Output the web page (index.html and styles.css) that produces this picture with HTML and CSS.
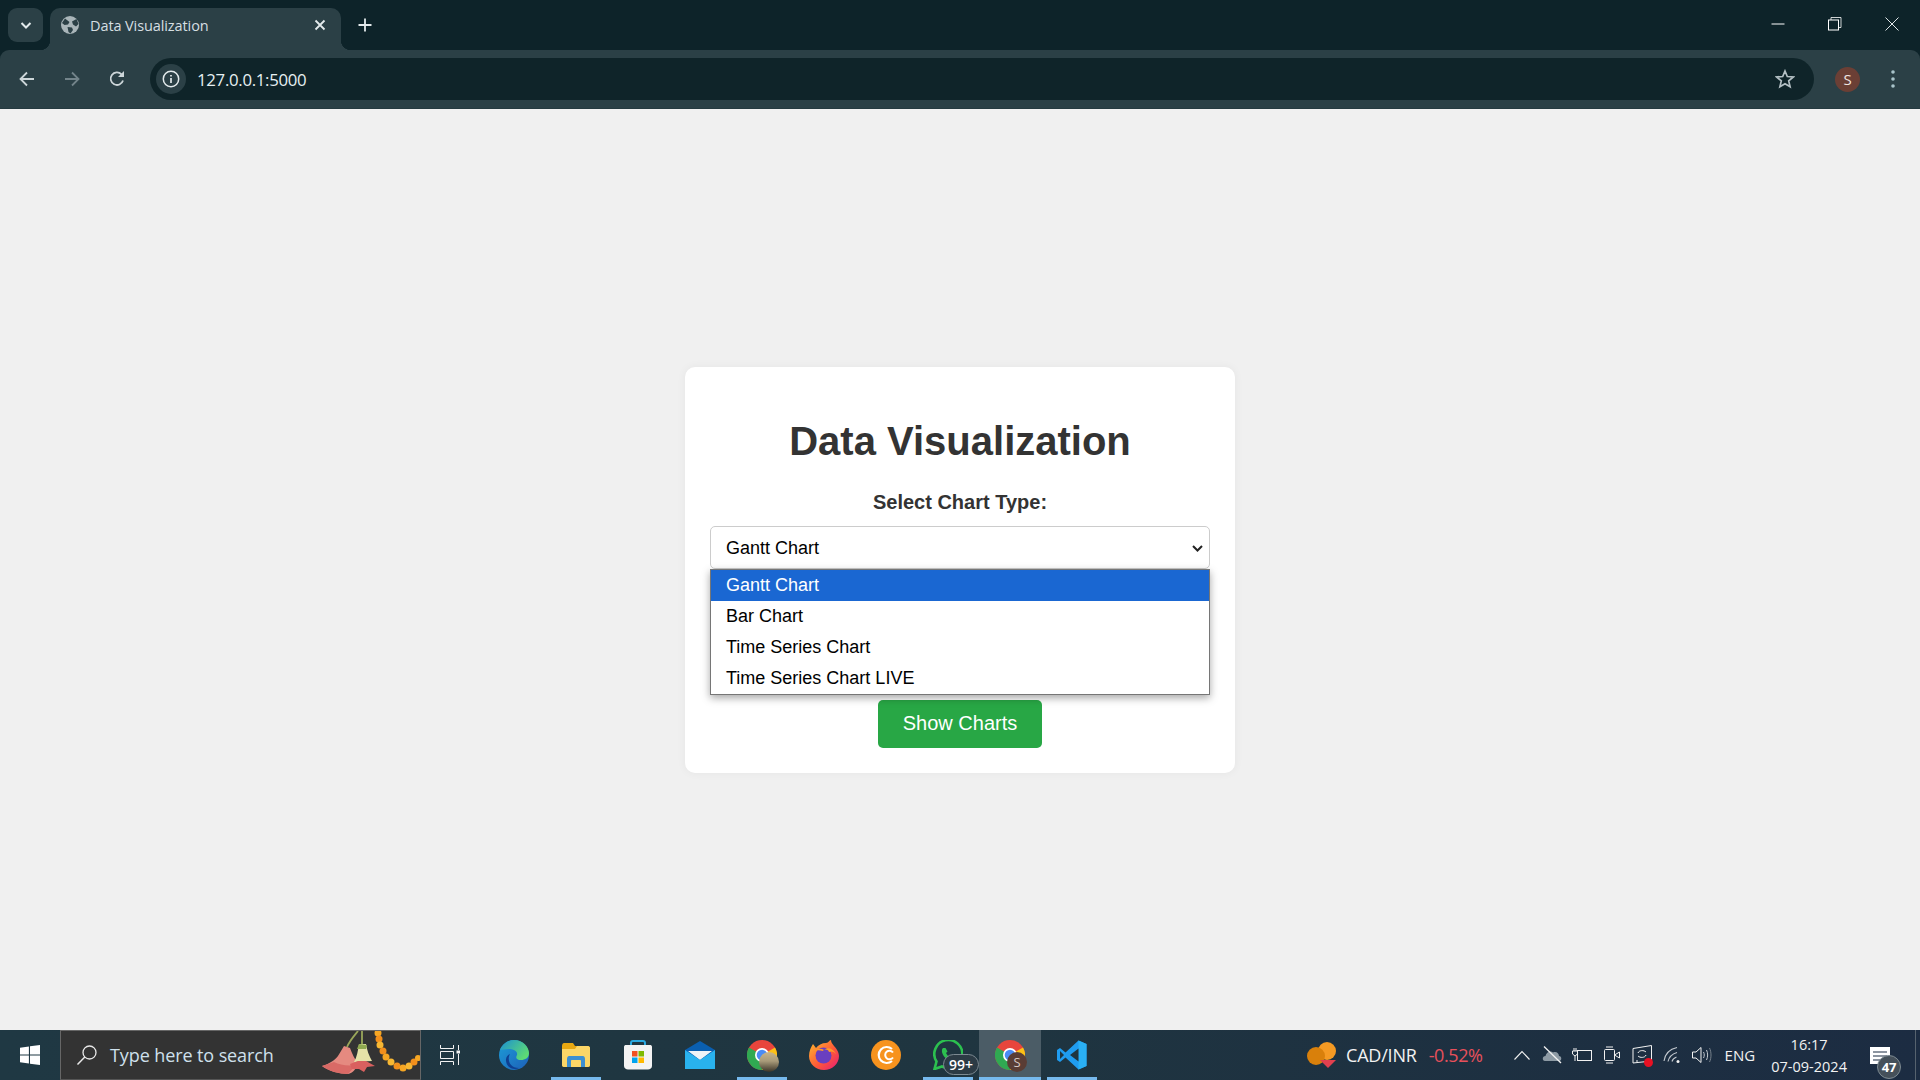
FILE: index.html
```html
<!DOCTYPE html>
<html lang="en">
<head>
    <meta charset="UTF-8">
    <title>Data Visualization</title>
    <link rel="stylesheet" href="styles.css">
</head>
<body>
    <!-- browser chrome -->
    <header class="browser">
        <div class="tabstrip">
            <div class="tab-search">
                <svg width="14" height="14" viewBox="0 0 14 14"><path d="M2.500 5 7 9.500 11.500 5" fill="none" stroke="#e3eaec" stroke-width="2"/></svg>
            </div>
            <div class="tab">
                <svg class="favicon" width="18" height="18" viewBox="0 0 18 18"><circle cx="9" cy="9" r="9" fill="#a9b5b9"/><path d="M4 2.500 8.500 6 7 8.500 3.500 9 1 7ZM11 5.500 15.500 3 17.500 8 15 10.500 12 8.500ZM6.500 11 11 11.500 12 14 9.500 17.500 7.500 16Z" fill="#2b4046"/></svg>
                <span class="tab-title">Data Visualization</span>
                <svg class="tab-close" width="12" height="12" viewBox="0 0 12 12"><path d="M1.500 1.500 10.500 10.500M10.500 1.500 1.500 10.500" stroke="#e3eaec" stroke-width="1.800"/></svg>
            </div>
            <svg class="new-tab" width="14" height="14" viewBox="0 0 14 14"><path d="M7 0.500V13.500M0.500 7H13.500" stroke="#e3eaec" stroke-width="1.800"/></svg>
            <div class="window-controls">
                <svg width="14" height="14" viewBox="0 0 14 14"><path d="M0.500 7H13.500" stroke="#fff"/></svg>
                <svg width="14" height="14" viewBox="0 0 14 14"><rect x="0.500" y="3" width="10" height="10" fill="none" stroke="#fff"/><path d="M3 3V0.500H13V10.500H10.500" fill="none" stroke="#fff" stroke-width="0.800"/></svg>
                <svg width="14" height="14" viewBox="0 0 14 14"><path d="M0.500 0.500 13.500 13.500M13.500 0.500 0.500 13.500" stroke="#dfe5e7"/></svg>
            </div>
        </div>
        <div class="toolbar">
            <svg class="nav-icon" width="18" height="18" viewBox="0 0 18 18"><path d="M16 9H3M9 2.500 2.500 9 9 15.500" fill="none" stroke="#cdd6d9" stroke-width="1.800"/></svg>
            <svg class="nav-icon" width="18" height="18" viewBox="0 0 18 18"><path d="M2 9H15M9 2.500 15.500 9 9 15.500" fill="none" stroke="#73848a" stroke-width="1.800"/></svg>
            <svg class="nav-icon" width="18" height="18" viewBox="0 0 18 18"><path d="M15 10.500A6.300 6.300 0 1 1 13.500 4.300" fill="none" stroke="#cdd6d9" stroke-width="1.800"/><path d="M16 1V7H10Z" fill="#cdd6d9"/></svg>
            <div class="omnibox">
                <div class="site-info">
                    <svg width="18" height="18" viewBox="0 0 18 18"><circle cx="9" cy="9" r="7.700" fill="none" stroke="#e3eaec" stroke-width="1.500"/><path d="M9 8V13M9 5V6.500" stroke="#e3eaec" stroke-width="1.700"/></svg>
                </div>
                <span class="url">127.0.0.1:5000</span>
                <svg class="star" width="20" height="20" viewBox="0 0 20 20"><path d="M10 2 12.300 7.500 18.300 8 13.700 11.900 15.100 17.800 10 14.700 4.900 17.800 6.300 11.900 1.700 8 7.700 7.500Z" fill="none" stroke="#b4c0c4" stroke-width="1.700"/></svg>
            </div>
            <div class="avatar">S</div>
            <svg class="menu-dots" width="6" height="20" viewBox="0 0 6 20"><circle cx="3" cy="3" r="1.800" fill="#a9c4cb"/><circle cx="3" cy="10" r="1.800" fill="#a9c4cb"/><circle cx="3" cy="17" r="1.800" fill="#a9c4cb"/></svg>
        </div>
    </header>

    <!-- page content -->
    <main class="page">
        <div class="card">
            <h1>Data Visualization</h1>
            <label class="chart-label" for="chartType">Select Chart Type:</label>
            <div class="select-wrap">
                <select id="chartType" class="chart-select">
                    <option>Gantt Chart</option>
                    <option>Bar Chart</option>
                    <option>Time Series Chart</option>
                    <option>Time Series Chart LIVE</option>
                </select>
                <svg class="select-arrow" width="11" height="7" viewBox="0 0 11 7"><path d="M1 1 5.500 5.500 10 1" fill="none" stroke="#222" stroke-width="2"/></svg>
                <ul class="select-popup">
                    <li class="selected">Gantt Chart</li>
                    <li>Bar Chart</li>
                    <li>Time Series Chart</li>
                    <li>Time Series Chart LIVE</li>
                </ul>
            </div>
            <button type="button" class="btn-show">Show Charts</button>
        </div>
    </main>

    <!-- windows taskbar -->
    <footer class="taskbar">
        <div class="start">
            <svg width="20" height="20" viewBox="0 0 20 20"><path d="M0 2.800 8.900 1.500V9.500H0ZM10 1.300 20 0V9.500H10ZM0 10.500H8.900V18.500L0 17.200ZM10 10.500H20V20L10 18.700Z" fill="#fff"/></svg>
        </div>
        <div class="search">
            <svg width="22" height="22" viewBox="0 0 22 22"><circle cx="13.500" cy="8.500" r="6.500" fill="none" stroke="#e8e8e8" stroke-width="1.300"/><path d="M8.800 13 1.500 20.500" stroke="#e8e8e8" stroke-width="1.500"/></svg>
            <span class="search-text">Type here to search</span>
            <svg class="search-art" width="100" height="49" viewBox="0 0 100 49">
                <path d="M38 0C34 5 30 9 27 16M42 0V13" fill="none" stroke="#9aa75a" stroke-width="1.800"/>
                <path d="M24 15 30 17C32 23 35 28 38 33C36 38 33 42 28 43C20 43 8 40 2 35C9 33 15 29 18 25C20 22 22 18 24 15Z" fill="#e58a80"/>
                <path d="M14 31C20 34 27 35 36 34L28 43C20 43 8 40 2 35Z" fill="#d96a66"/>
                <path d="M39 13H46C47 19 49 25 52 30L34 31C37 26 38 19 39 13Z" fill="#e6e2a8"/>
                <path d="M37 18 46 18 47 14 39 13Z" fill="#8fa850"/>
                <path d="M30 33 38 30 46 30 55 35 47 36 44 41 39 38 32 38Z" fill="#d9605f"/>
                <circle cx="58" cy="2" r="3.500" fill="#f6a623"/><circle cx="59" cy="8" r="3.500" fill="#f28f1c"/><circle cx="60" cy="14" r="3.500" fill="#f7b733"/><circle cx="63" cy="20" r="3.500" fill="#f28f1c"/><circle cx="66" cy="26" r="3.500" fill="#f6a623"/><circle cx="71" cy="31" r="3.500" fill="#f7b733"/><circle cx="77" cy="35" r="3.500" fill="#f28f1c"/><circle cx="83" cy="37" r="3.500" fill="#f6a623"/><circle cx="89" cy="35" r="3.500" fill="#f7b733"/><circle cx="94" cy="31" r="3.500" fill="#f28f1c"/><circle cx="98" cy="27" r="3" fill="#f6a623"/>
            </svg>
        </div>
        <div class="task-item task-view">
            <svg width="20" height="20" viewBox="0 0 20 20"><path d="M0.500 0V3.500H13.500V0M0.500 20V16.500H13.500V20M0.500 6.500H13.500V13.500H0.500ZM18.500 0V5M18.500 9V20" fill="none" stroke="#f2f2f2" stroke-width="1"/><rect x="16.500" y="5.500" width="3.500" height="3" fill="#f2f2f2"/></svg>
        </div>
        <div class="task-item">
            <svg width="30" height="30" viewBox="0 0 30 30">
                <defs><linearGradient id="edgeA" x1="0" y1="0" x2="1" y2="1"><stop offset="0" stop-color="#1c9ed8"/><stop offset="1" stop-color="#1d5fb8"/></linearGradient><linearGradient id="edgeB" x1="0" y1="0" x2="1" y2="0.600"><stop offset="0" stop-color="#1b8fd3"/><stop offset="1" stop-color="#5ddb74"/></linearGradient></defs>
                <circle cx="15" cy="15" r="15" fill="url(#edgeA)"/>
                <path d="M1 10C4 3 10 0 15 0C24 0 30 7 30 13C30 18 26 20 22 20C18 20 16 18 18 15C19 11 14 9 10 9C6 9 3 10 1 10Z" fill="url(#edgeB)"/>
                <path d="M11 14C8 19 10 28 20 28C16 30 8 29 7 21C6.500 17 9 15 11 14Z" fill="#0f3f92"/>
            </svg>
        </div>
        <div class="task-item running">
            <svg width="28" height="24" viewBox="0 0 28 24">
                <path d="M0 3C0 1 1 0 2 0H11L13 3H26C27 3 28 4 28 5V22C28 23 27 24 26 24H2C1 24 0 23 0 22Z" fill="#e8a812"/>
                <path d="M0 6H13L15 3H26C27 3 28 4 28 5V22C28 23 27 24 26 24H2C1 24 0 23 0 22Z" fill="#fcd667"/>
                <path d="M5 24V16C5 14 6 13 7 13H21C22 13 23 14 23 16V24H19V18C19 17 18.500 17 18 17H10C9.500 17 9 17 9 18V24Z" fill="#3d8fd1"/>
            </svg>
        </div>
        <div class="task-item">
            <svg width="30" height="30" viewBox="0 0 30 30">
                <path d="M8 6V3C8 1.500 9 1 10 1H20C21 1 22 1.500 22 3V6" fill="none" stroke="#29a9e1" stroke-width="2"/>
                <path d="M1 7C1 5.500 2 5 3 5H27C28 5 29 5.500 29 7V26C29 28 27 29.500 25 29.500H5C3 29.500 1 28 1 26Z" fill="#f3f3f3"/>
                <rect x="9" y="11" width="5.500" height="5.500" fill="#f25022"/><rect x="15.500" y="11" width="5.500" height="5.500" fill="#7fba00"/><rect x="9" y="17.500" width="5.500" height="5.500" fill="#00a4ef"/><rect x="15.500" y="17.500" width="5.500" height="5.500" fill="#ffb900"/>
            </svg>
        </div>
        <div class="task-item">
            <svg width="30" height="28" viewBox="0 0 30 28">
                <path d="M15 0 30 9V28H0V9Z" fill="#0a5fb0"/>
                <path d="M3 10H27L15 19Z" fill="#eef3f7"/>
                <path d="M0 9 15 19 30 9V28H0Z" fill="#29b2ee"/>
            </svg>
        </div>
        <div class="task-item running">
            <span class="icon-wrap">
                <svg width="30" height="30" viewBox="0 0 30 30">
                    <circle cx="15" cy="15" r="15" fill="#e8453c"/>
                    <path d="M15 15 28 7.500A15 15 0 0 1 15 30Z" fill="#fbc116"/>
                    <path d="M15 15 15 30A15 15 0 0 1 2 7.500Z" fill="#30a952"/>
                    <circle cx="15" cy="15" r="7" fill="#fff"/><circle cx="15" cy="15" r="5.300" fill="#4b8bf5"/>
                </svg>
                <span class="chrome-badge photo"></span>
            </span>
        </div>
        <div class="task-item">
            <svg width="30" height="30" viewBox="0 0 30 30">
                <defs><linearGradient id="foxA" x1="0" y1="0" x2="1" y2="1"><stop offset="0" stop-color="#ffbd2e"/><stop offset="0.550" stop-color="#ff5a37"/><stop offset="1" stop-color="#e5197a"/></linearGradient></defs>
                <path d="M4 4 7 8C9 5 13 3 17 3C20 3 20 0 22 0C22 3 24 4 25 6C29 10 30 14 30 16C30 24 23 30 15 30C7 30 0 24 0 16C0 11 2 7 4 4Z" fill="url(#foxA)"/>
                <circle cx="14.500" cy="15.500" r="8" fill="#6a3fc0"/>
                <path d="M4 12C8 8 12 8 15 10C18 7 24 8 27 14C25 11 22 11 20 12C19 9 15 9 14 11C10 10 6 10 4 12Z" fill="#ff9a2a"/>
            </svg>
        </div>
        <div class="task-item">
            <svg width="30" height="30" viewBox="0 0 30 30">
                <circle cx="15" cy="15" r="15" fill="#f7931e"/>
                <path d="M21 9A8 8 0 1 0 21 21" fill="none" stroke="#fff" stroke-width="2.200"/>
                <path d="M22 12.500A4.300 4.300 0 1 0 22 17.500" fill="none" stroke="#fff" stroke-width="2"/>
            </svg>
        </div>
        <div class="task-item running">
            <span class="icon-wrap">
                <svg width="30" height="30" viewBox="0 0 30 30">
                    <path d="M1.500 29 3.500 21.500A14 14 0 1 1 9 26.500Z" fill="none" stroke="#2cc04f" stroke-width="2.600"/>
                    <path d="M10 8C8 10 9 14 11.500 17C14 20 18 22 20.500 21C22 20.400 22.500 19 22.500 18L19 16 17.500 17.500C16 17 13.500 14.500 13 13L14.500 11.500 12.500 8Z" fill="#2cc04f"/>
                </svg>
                <span class="count-badge">99+</span>
            </span>
        </div>
        <div class="task-item running active">
            <span class="icon-wrap">
                <svg width="30" height="30" viewBox="0 0 30 30">
                    <circle cx="15" cy="15" r="15" fill="#e8453c"/>
                    <path d="M15 15 28 7.500A15 15 0 0 1 15 30Z" fill="#fbc116"/>
                    <path d="M15 15 15 30A15 15 0 0 1 2 7.500Z" fill="#30a952"/>
                    <circle cx="15" cy="15" r="7" fill="#fff"/><circle cx="15" cy="15" r="5.300" fill="#4b8bf5"/>
                </svg>
                <span class="chrome-badge">S</span>
            </span>
        </div>
        <div class="task-item running">
            <svg width="30" height="30" viewBox="0 0 30 30">
                <path d="M21.500 0.500 29.500 4V26L21.500 29.500 8.500 17.500 3 22 0 20V10L3 8 8.500 12.500Z" fill="#1f9cf0"/>
                <path d="M21.500 0.500V29.500L29.500 26V4Z" fill="#2ab0f5"/>
                <path d="M21.500 8.500 13 15 21.500 21.500ZM3 11V19L7 15Z" fill="#1f3540"/>
            </svg>
        </div>

        <div class="tray">
            <div class="ticker">
                <svg width="30" height="26" viewBox="0 0 30 26">
                    <circle cx="20" cy="9" r="9" fill="#f59a23"/>
                    <circle cx="9" cy="14" r="9" fill="#d9800b"/>
                    <path d="M13 18H29L21 26Z" fill="#e2404f"/>
                </svg>
                <span class="ticker-name">CAD/INR</span>
                <span class="ticker-change">-0.52%</span>
            </div>
            <div class="tray-icons">
                <svg width="16" height="10" viewBox="0 0 16 10"><path d="M0.500 9.500 8 1.500 15.500 9.500" fill="none" stroke="#f2f2f2" stroke-width="1.100"/></svg>
                <svg width="20" height="18" viewBox="0 0 20 18"><path d="M3 15C0 15 0 10 3.500 10C4 6 9 4 11 6.500C14 5 17 7 17 10C20 10 20 15 17 15Z" fill="#8d9aa4"/><path d="M2 0.500 19 17" stroke="#f2f2f2" stroke-width="1.300"/></svg>
                <svg width="20" height="14" viewBox="0 0 20 14"><rect x="5.500" y="2.500" width="14" height="10" fill="none" stroke="#f2f2f2"/><path d="M2 0V3M4 0V3M0.500 3H5.500V6L3 8 0.500 6ZM3 8V13" fill="none" stroke="#f2f2f2"/></svg>
                <svg width="16" height="18" viewBox="0 0 16 18"><rect x="0.500" y="3.500" width="10" height="11" rx="1" fill="none" stroke="#f2f2f2"/><path d="M10.500 9 15.500 6V12ZM2 1H9M2 17H9" fill="none" stroke="#f2f2f2"/></svg>
                <span class="update-icon">
                    <svg width="20" height="20" viewBox="0 0 20 20"><path d="M1 3.500 19.500 0.500V16L1 18ZM6 8C7 5 12 5 14 7M14 10C13 13 8 13 6 11M6 16H4" fill="none" stroke="#f2f2f2"/></svg>
                    <span class="red-dot"></span>
                </span>
                <svg width="18" height="18" viewBox="0 0 18 18"><circle cx="15" cy="15.500" r="1.500" fill="#f2f2f2"/><path d="M1 15C2 8 7 3 14 1.500M5 15.500C6 11 9 8 14 6.500M9 15.500C9.500 13.500 11 12 13.500 11" fill="none" stroke="#c4cad0" stroke-width="1.100"/></svg>
                <svg width="20" height="18" viewBox="0 0 20 18"><path d="M0.500 6H4L9 1.500V16.500L4 12H0.500Z" fill="none" stroke="#f2f2f2"/><path d="M11.500 6C12.500 8 12.500 10 11.500 12M14.500 4C16 7 16 11 14.500 14" fill="none" stroke="#c4cad0"/><path d="M17.500 2C19.500 6 19.500 12 17.500 16" fill="none" stroke="#77818b"/></svg>
            </div>
            <span class="lang">ENG</span>
            <div class="clock">
                <span>16:17</span>
                <span>07-09-2024</span>
            </div>
            <div class="notify">
                <svg width="20" height="17" viewBox="0 0 20 17"><path d="M0 0H20V17H0Z" fill="#fff"/><path d="M3 5H17M3 9H17M3 13H12" stroke="#1b2b42" stroke-width="1.200"/></svg>
                <span class="notify-badge">47</span>
            </div>
            <div class="show-desktop"></div>
        </div>
    </footer>
</body>
</html>
```

FILE: styles.css
```css
* {
    box-sizing: border-box;
}

body {
    margin: 0;
    height: 100vh;
    display: flex;
    flex-direction: column;
    overflow: hidden;
    font-family: "Liberation Sans", Arial, sans-serif;
    background-color: #f0f0f0;
    color: #333;
}

/* browser chrome */
.browser {
    height: 109px;
    flex-shrink: 0;
    background-color: #0d2329;
    font-family: "Open Sans", "Noto Sans", sans-serif;
    color: #e3eaec;
}

.tabstrip {
    height: 50px;
    display: flex;
    align-items: flex-start;
    padding: 8px 0 0 8px;
}

.tab-search {
    width: 35px;
    height: 34px;
    margin-right: 7px;
    display: flex;
    align-items: center;
    justify-content: center;
    background-color: #2b4046;
    border-radius: 9px;
}

.tab {
    position: relative;
    width: 291px;
    height: 42px;
    display: flex;
    align-items: center;
    padding: 0 15px 8px 11px;
    background-color: #2b4046;
    border-radius: 10px 10px 0 0;
}

.tab::before,
.tab::after {
    content: "";
    position: absolute;
    bottom: 0;
    width: 10px;
    height: 10px;
}

.tab::before {
    left: -10px;
    background: radial-gradient(circle at 0 0, transparent 10px, #2b4046 10.5px);
}

.tab::after {
    right: -10px;
    background: radial-gradient(circle at 100% 0, transparent 10px, #2b4046 10.5px);
}

.favicon {
    margin-right: 11px;
}

.tab-title {
    flex: 1;
    font-size: 14.500px;
    letter-spacing: -0.1px;
    color: #d6dfe2;
}

.new-tab {
    margin: 10px 0 0 17px;
}

.window-controls {
    margin-left: auto;
    display: flex;
    gap: 43px;
    padding: 9px 21px 0 0;
}

.toolbar {
    height: 59px;
    display: flex;
    align-items: center;
    padding: 0 18px 0 18px;
    background-color: #2b4046;
    border-radius: 9px 9px 0 0;
    border-bottom: 1px solid #253a40;
}

.nav-icon {
    margin-right: 27px;
}

.nav-icon:nth-child(3) {
    margin-right: 24px;
}

.omnibox {
    flex: 1;
    height: 42px;
    display: flex;
    align-items: center;
    padding: 0 19px 0 6px;
    background-color: #0f2429;
    border-radius: 21px;
}

.site-info {
    width: 30px;
    height: 30px;
    display: flex;
    align-items: center;
    justify-content: center;
    background-color: #2b4046;
    border-radius: 50%;
}

.url {
    flex: 1;
    margin-left: 11px;
    font-size: 16.800px;
    letter-spacing: -0.3px;
    color: #e6f0f2;
}

.avatar {
    width: 25px;
    height: 25px;
    margin: 0 30px 0 21px;
    background-color: #6b3f35;
    border-radius: 50%;
    font-size: 15px;
    line-height: 25px;
    text-align: center;
    color: #f0e4e0;
}

.menu-dots {
    margin-right: 6px;
}

/* page */
.page {
    flex: 1;
    display: flex;
    align-items: center;
    justify-content: center;
}

.card {
    width: 550px;
    padding: 25px;
    background-color: white;
    border-radius: 10px;
    box-shadow: 0 0 10px rgba(0, 0, 0, 0.05);
    text-align: center;
}

h1 {
    margin: 26px 0 27px;
    font-size: 40px;
    line-height: 46px;
    color: #333;
}

.chart-label {
    display: block;
    margin-bottom: 12px;
    font-size: 20px;
    line-height: 23px;
    font-weight: bold;
    color: #333;
}

.select-wrap {
    position: relative;
    margin-bottom: 131px;
}

.chart-select {
    display: block;
    width: 100%;
    height: 43px;
    padding: 1px 15px 0;
    border: 1px solid #ccc;
    border-radius: 5px;
    background-color: white;
    appearance: none;
    font-family: inherit;
    font-size: 18px;
    color: #000;
}

.select-arrow {
    position: absolute;
    top: 19px;
    right: 7px;
}

.select-popup {
    position: absolute;
    top: 43px;
    left: 0;
    right: 0;
    margin: 0;
    padding: 0;
    list-style: none;
    background-color: white;
    border: 1px solid #767676;
    box-shadow: 0 3px 8px rgba(0, 0, 0, 0.35);
    font-size: 18px;
    text-align: left;
    color: #000;
}

.select-popup li {
    height: 31px;
    padding-left: 15px;
    line-height: 31px;
}

.select-popup .selected {
    background-color: #1a67d2;
    color: white;
}

.btn-show {
    display: block;
    width: 164px;
    height: 48px;
    margin: 0 auto;
    border: none;
    border-radius: 5px;
    background-color: #28a745;
    font-family: inherit;
    font-size: 20px;
    color: white;
    cursor: pointer;
}

/* taskbar */
.taskbar {
    height: 50px;
    flex-shrink: 0;
    display: flex;
    align-items: center;
    background: linear-gradient(90deg, #1f3843 0%, #1f3540 50%, #1c2c42 100%);
    font-family: "Open Sans", "Noto Sans", sans-serif;
    color: #f2f2f2;
}

.start {
    width: 60px;
    display: flex;
    justify-content: center;
}

.search {
    position: relative;
    width: 361px;
    height: 50px;
    display: flex;
    align-items: center;
    padding-left: 15px;
    background-color: #333;
    border: 1px solid #666;
    border-bottom-color: #555;
}

.search-text {
    margin-left: 12px;
    font-size: 18px;
    letter-spacing: -0.1px;
    color: #cfe0ec;
}

.search-art {
    position: absolute;
    right: 0;
    top: 0;
}

.task-item {
    position: relative;
    width: 62px;
    height: 50px;
    flex-shrink: 0;
    display: flex;
    align-items: center;
    justify-content: center;
}

.task-view svg {
    margin-right: 4px;
}

.task-item.running::after {
    content: "";
    position: absolute;
    left: 6px;
    right: 6px;
    bottom: 0;
    height: 3px;
    background-color: #76b9ed;
}

.task-item.active {
    background-color: #4b5c66;
}

.task-item.active::after {
    left: 0;
    right: 0;
}

.icon-wrap {
    position: relative;
    display: flex;
}

.chrome-badge {
    position: absolute;
    right: -2px;
    bottom: -2px;
    width: 20px;
    height: 20px;
    background-color: #5a3d35;
    border-radius: 50%;
    font-size: 13px;
    line-height: 20px;
    text-align: center;
    color: #d8c8c4;
}

.chrome-badge.photo {
    background: linear-gradient(180deg, #c8b48a 0%, #a99b7a 45%, #3a3428 100%);
}

.count-badge {
    position: absolute;
    left: 10px;
    bottom: -5px;
    width: 36px;
    height: 21px;
    background-color: #2c3b45;
    border: 1px solid #7d8a92;
    border-radius: 11px;
    font-size: 14px;
    font-weight: 600;
    line-height: 19px;
    text-align: center;
    color: white;
}

.tray {
    flex: 1;
    display: flex;
    align-items: center;
    height: 50px;
    padding-left: 204px;
}

.ticker {
    display: flex;
    align-items: center;
}

.ticker-name {
    margin-left: 9px;
    font-size: 18px;
    letter-spacing: -0.2px;
}

.ticker-change {
    margin-left: 12px;
    font-size: 18px;
    letter-spacing: -0.4px;
    color: #e8505b;
}

.tray-icons {
    display: grid;
    grid-template-columns: repeat(7, 30px);
    justify-items: center;
    align-items: center;
    margin-left: 24px;
}

.update-icon {
    position: relative;
    display: flex;
}

.red-dot {
    position: absolute;
    right: -1px;
    bottom: -2px;
    width: 9px;
    height: 9px;
    background-color: #e81123;
    border-radius: 50%;
}

.lang {
    margin-left: 8px;
    font-size: 15px;
}

.clock {
    width: 76px;
    margin-left: 16px;
    display: flex;
    flex-direction: column;
    align-items: center;
    gap: 3px;
    font-size: 14.500px;
    line-height: 19px;
    white-space: nowrap;
}

.notify {
    position: relative;
    margin-left: 23px;
    display: flex;
}

.notify-badge {
    position: absolute;
    left: 7px;
    top: 8px;
    width: 24px;
    height: 24px;
    background-color: #45505a;
    border: 1px solid #7d8a92;
    border-radius: 50%;
    font-size: 13px;
    font-weight: 700;
    line-height: 22px;
    text-align: center;
    color: white;
}

.show-desktop {
    width: 1px;
    height: 50px;
    margin-left: auto;
    margin-right: 4px;
    background-color: #56626e;
}
```
